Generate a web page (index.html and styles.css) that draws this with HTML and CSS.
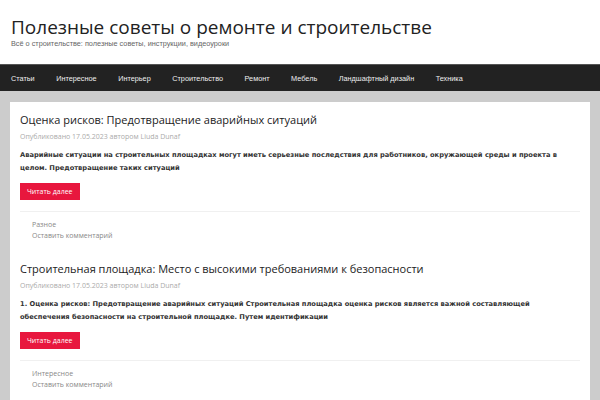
FILE: index.html
```html
<!DOCTYPE html>
<html lang="ru">
<head>
    <meta charset="UTF-8">
    <meta name="viewport" content="width=device-width, initial-scale=1.0">
    <title>Полезные советы о ремонте и строительстве</title>
    <link rel="stylesheet" href="styles.css">
</head>
<body>

    <!-- Шапка -->
    <header class="site-header">
        <h1 class="site-title">Полезные советы о ремонте и строительстве</h1>
        <p class="site-description">Всё о строительстве: полезные советы, инструкции, видеоуроки</p>
    </header>

    <!-- Меню -->
    <nav class="main-nav">
        <a href="#">Статьи</a>
        <a href="#">Интересное</a>
        <a href="#">Интерьер</a>
        <a href="#">Строительство</a>
        <a href="#">Ремонт</a>
        <a href="#">Мебель</a>
        <a href="#">Ландшафтный дизайн</a>
        <a href="#">Техника</a>
    </nav>

    <!-- Контент -->
    <div class="site-content">
        <main class="content-area">
            <article class="post">
                <h2 class="entry-title">Оценка рисков: Предотвращение аварийных ситуаций</h2>
                <div class="entry-meta">Опубликовано 17.05.2023 автором Liuda Dunaf</div>
                <p class="entry-summary">Аварийные ситуации на строительных площадках могут иметь серьезные последствия для работников, окружающей среды и проекта в целом. Предотвращение таких ситуаций</p>
                <a href="#" class="more-link">Читать далее</a>
                <footer class="entry-footer">
                    <a href="#">Разное</a>
                    <a href="#">Оставить комментарий</a>
                </footer>
            </article>

            <article class="post">
                <h2 class="entry-title">Строительная площадка: Место с высокими требованиями к безопасности</h2>
                <div class="entry-meta">Опубликовано 17.05.2023 автором Liuda Dunaf</div>
                <p class="entry-summary">1. Оценка рисков: Предотвращение аварийных ситуаций Строительная площадка оценка рисков является важной составляющей обеспечения безопасности на строительной площадке. Путем идентификации</p>
                <a href="#" class="more-link">Читать далее</a>
                <footer class="entry-footer">
                    <a href="#">Интересное</a>
                    <a href="#">Оставить комментарий</a>
                </footer>
            </article>
        </main>
    </div>

</body>
</html>
```

FILE: styles.css
```css
body {
    margin: 0;
    padding: 0;
    font-family: "DejaVu Sans", sans-serif;
    background-color: #fff;
    color: #222;
}

a {
    text-decoration: none;
}

/* Шапка */
.site-header {
    padding: 15px 11px 15px;
}

.site-title {
    margin: 0;
    font-family: "Open Sans", sans-serif;
    font-size: 19px;
    font-weight: 400;
    line-height: 24px;
    color: #222;
}

.site-description {
    margin: 0;
    font-family: "Liberation Sans", sans-serif;
    font-size: 7.3px;
    line-height: 10px;
    color: #666;
}

/* Меню */
.main-nav {
    display: flex;
    height: 26px;
    align-items: center;
    background-color: #222;
    border-top: 1px solid #555;
    padding: 0 11px;
    gap: 21.5px;
}

.main-nav a {
    font-family: "Liberation Sans", sans-serif;
    font-size: 7.3px;
    color: #eee;
}

/* Контент */
.site-content {
    background-color: #ccc;
    padding: 11px 10px 0;
}

.content-area {
    background-color: #fff;
    padding: 10px 10px 10px;
}

.post {
    margin-bottom: 20.5px;
}

.entry-title {
    margin: 0;
    font-family: "Open Sans", sans-serif;
    font-size: 11px;
    font-weight: 400;
    line-height: 16px;
    color: #222;
}

.entry-meta {
    margin-top: 4px;
    font-family: "Open Sans", sans-serif;
    font-size: 7px;
    line-height: 10px;
    color: #aaa;
}

.entry-summary {
    margin: 6.5px 0 8.5px;
    font-size: 6.7px;
    font-weight: 700;
    line-height: 13px;
    color: #333;
}

.more-link {
    display: inline-block;
    background-color: #e8173e;
    color: #fff;
    font-family: "Open Sans", sans-serif;
    font-size: 7px;
    padding: 3px 7px;
    line-height: 11px;
    vertical-align: top;
}

.entry-footer {
    margin-top: 9px;
    border-top: 1px solid #f0f0f0;
    padding: 6.5px 12px 0;
}

.entry-footer a {
    display: block;
    font-family: "Open Sans", sans-serif;
    font-size: 7px;
    line-height: 11px;
    color: #888;
}
```
